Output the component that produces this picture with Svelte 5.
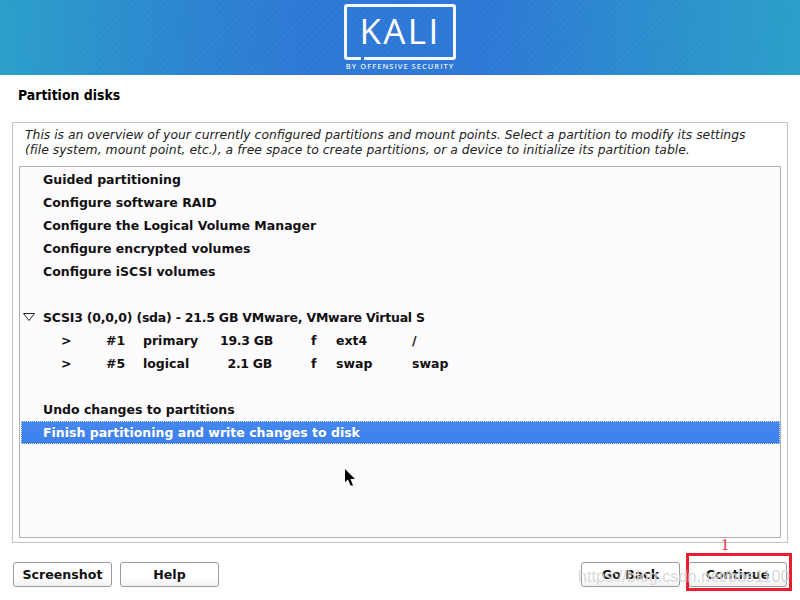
<script>
  const actions = ["Guided partitioning","Configure software RAID","Configure the Logical Volume Manager","Configure encrypted volumes","Configure iSCSI volumes"];
  const parts = [
    {n:"#1",t:"primary",s:"19.3 GB",f:"f",fs:"ext4",m:"/"},
    {n:"#5",t:"logical",s:"2.1 GB",f:"f",fs:"swap",m:"swap"}
  ];
</script>

<div class="page">
  <header class="banner">
    <div class="logo">
      <div class="logo-box">KALI<span class="notch"></span></div>
      <div class="logo-sub">BY OFFENSIVE SECURITY</div>
    </div>
  </header>
  <h1 class="title">Partition disks</h1>
  <section class="frame">
    <p class="intro">This is an overview of your currently configured partitions and mount points. Select a partition to modify its settings<br><span class="line2">(file system, mount point, etc.), a free space to create partitions, or a device to initialize its partition table.</span></p>
    <div class="list">
      {#each actions as a}
        <div class="row">{a}</div>
      {/each}
      <div class="row"></div>
      <div class="row disk"><svg class="tri" width="12" height="8" viewBox="0 0 12 8"><path d="M.5.5H11.500L6 7.500Z" fill="none" stroke="#222" stroke-width="1"/></svg>SCSI3 (0,0,0) (sda) - 21.5 GB VMware, VMware Virtual S</div>
      {#each parts as p}
        <div class="row part">
          <span class="c-arrow">&gt;</span><span class="c-n">{p.n}</span><span class="c-t">{p.t}</span><span class="c-s">{p.s}</span><span class="c-f">{p.f}</span><span class="c-fs">{p.fs}</span><span>{p.m}</span>
        </div>
      {/each}
      <div class="row"></div>
      <div class="row">Undo changes to partitions</div>
      <div class="row selected">Finish partitioning and write changes to disk</div>
      <svg class="cursor" width="11" height="17" viewBox="0 0 11 17"><path d="M0 0V13L3 10.500L5.500 16.500H8L5.500 10H10Z" fill="#000"/></svg>
    </div>
  </section>
  <footer class="buttons">
    <button class="btn">Screenshot</button>
    <button class="btn">Help</button>
    <span class="spacer"></span>
    <button class="btn">Go Back</button>
    <button class="btn">Continue</button>
    <span class="mark"></span>
    <span class="num">1</span>
    <span class="wm">https://blog.csdn.net/bbs1100</span>
  </footer>
</div>

<style>
  :global(body) { margin: 0; background: #fff; }
  .page { width: 800px; height: 600px; overflow: hidden; font-family: "DejaVu Sans", sans-serif; color: #111; }
  .banner {
    height: 75px; display: flex; justify-content: center; box-sizing: border-box; padding-top: 4px;
    background:
      repeating-linear-gradient(135deg, rgba(255,255,255,.025) 0 2px, transparent 2px 5px),
      linear-gradient(90deg, #2a9fc9 0%, #2b86cf 22%, #2d78d5 38%, #2d77d6 60%, #2b8ccd 80%, #2a9fc8 100%);
  }
  .logo { width: 112px; display: flex; flex-direction: column; align-items: center; color: #fff; }
  .logo-box {
    position: relative; height: 56px; width: 100%; box-sizing: border-box; border: 3px solid #f4f8fd; border-radius: 3px;
    font: 500 35px/47px "Open Sans", sans-serif; text-align: center; letter-spacing: 2.4px;
  }
  .notch { position: absolute; left: 14px; bottom: -3px; width: 3px; height: 3px; background: #2d78d5; }
  .logo-sub { font: 600 7.5px/9px "Open Sans", sans-serif; letter-spacing: 1.02px; margin-top: 2px; white-space: nowrap; color: #e6eefa; }
  .title { margin: 0; height: 47px; box-sizing: border-box; padding: 12px 0 0 18px; font: 700 13.9px/16px "DejaVu Sans Condensed", "DejaVu Sans", sans-serif; color: #000; }
  .frame { margin: 0 12px; height: 421px; box-sizing: border-box; border: 1px solid #c4c4c4; padding: 5px 6px 4px; }
  .intro { margin: 0; height: 38px; padding: 0 6px; font: oblique 400 12.37px/15px "DejaVu Sans", sans-serif; color: #222; white-space: nowrap; }
  .line2 { letter-spacing: .035px; }
  .list { position: relative; height: 372px; box-sizing: border-box; border: 1px solid #b0b0b0; background: #fefbff; padding-top: 1px; }
  .row { height: 23px; padding-left: 23px; font: 700 12.5px/23px "DejaVu Sans", sans-serif; color: #111; white-space: pre; position: relative; }
  .disk { letter-spacing: -.22px; }
  .tri { position: absolute; left: 3px; top: 7px; }
  .part { display: flex; padding-left: 41px; }
  .c-arrow { width: 45px; }
  .c-n { width: 37px; }
  .c-t { width: 62px; }
  .c-s { width: 52px; text-align: right; margin-right: 39px; flex: none; margin-left: 15px; letter-spacing: -.3px; }
  .c-f { width: 25px; }
  .c-fs { width: 76px; }
  .selected { margin: 0 0 0 1px; padding-left: 22px; color: #fff; background: linear-gradient(#4688ee, #3d7fec); outline: 1px dotted #cfe0fb; outline-offset: -1px; }
  .cursor { position: absolute; left: 325px; top: 302px; }
  .buttons { position: relative; display: flex; gap: 8px; padding: 19px 13px 0; }
  .spacer { flex: 1; }
  .btn {
    width: 99px; height: 25px; box-sizing: border-box; border: 1px solid #9b9b9b; border-radius: 3px; padding: 1px 0 0;
    background: linear-gradient(#fff 60%, #f1f1f1); font: 700 12.6px/1 "DejaVu Sans", sans-serif; color: #111;
  }
  .mark { position: absolute; left: 686px; top: 10px; width: 106px; height: 38px; box-sizing: border-box; border: 3px solid #ee1c2e; }
  .num { position: absolute; left: 721px; top: -7px; font: 400 16px/18px "Liberation Serif", serif; color: #ee2a3a; }
  .wm { position: absolute; left: 578px; top: 23px; font: 400 16.300px/20px "Liberation Sans", sans-serif; color: rgba(190,190,190,.6); white-space: nowrap; text-shadow: 0 0 1px rgba(255,255,255,.8); }
</style>
